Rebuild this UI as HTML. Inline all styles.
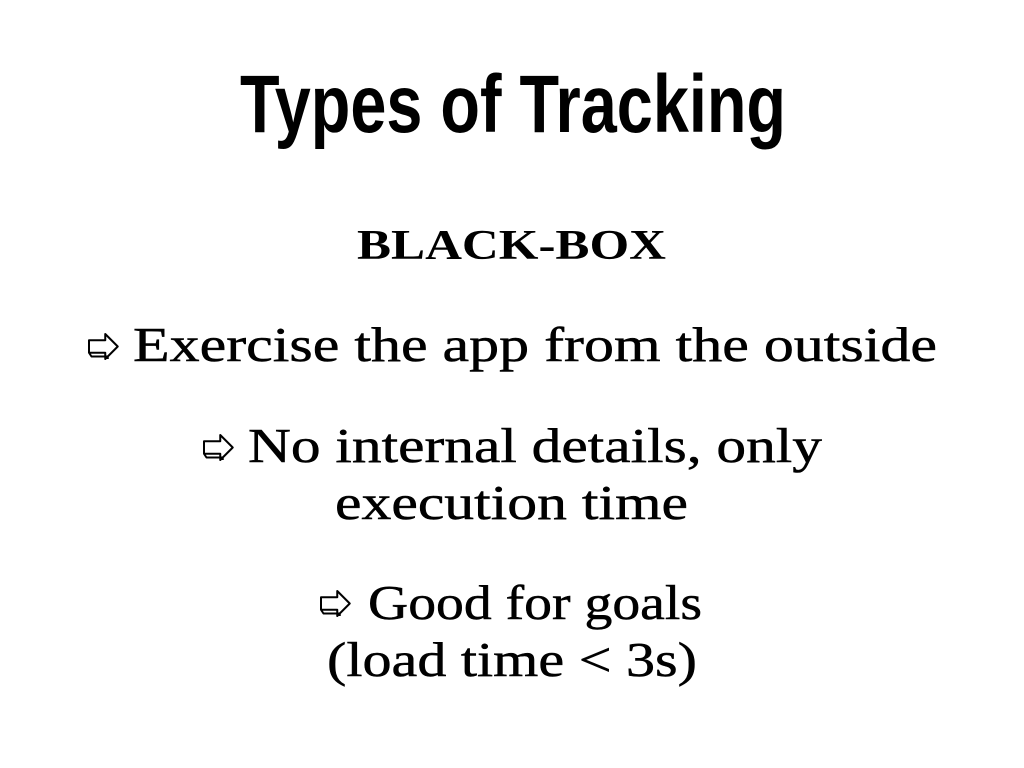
<!DOCTYPE html>
<html><head><meta charset="utf-8"><style>
html,body{margin:0;padding:0;background:#fff;width:1024px;height:768px;overflow:hidden}
</style></head><body>
<svg width="1024" height="768" viewBox="0 0 1024 768" xmlns="http://www.w3.org/2000/svg">
<rect width="1024" height="768" fill="#fff"/>
<text x="240" y="132" font-family="Liberation Sans Narrow, Liberation Sans, sans-serif" font-weight="bold" font-size="82" textLength="546" lengthAdjust="spacingAndGlyphs" fill="#000">Types of Tracking</text>
<text x="357" y="259" font-family="Liberation Serif, serif" font-weight="bold" font-size="42" textLength="309" lengthAdjust="spacingAndGlyphs" fill="#000">BLACK-BOX</text>
<g font-family="Liberation Serif, serif" font-size="49" fill="#000" stroke="#000" stroke-width="0.5">
<text x="133" y="361" textLength="804" lengthAdjust="spacingAndGlyphs">Exercise the app from the outside</text>
<text x="248" y="462" textLength="574" lengthAdjust="spacingAndGlyphs">No internal details, only</text>
<text x="335" y="519" textLength="353" lengthAdjust="spacingAndGlyphs">execution time</text>
<text x="368" y="619" textLength="334" lengthAdjust="spacingAndGlyphs">Good for goals</text>
<text x="327" y="676" textLength="370" lengthAdjust="spacingAndGlyphs">(load time &lt; 3s)</text>
</g>
<defs><path id="ar" d="M0 5 H13 V0 L23 10 L13 20 V15 H0 Z M0 15 L2 18 H15 V20" fill="none" stroke="#000" stroke-width="1.6" stroke-linejoin="round"/></defs>
<use href="#ar" transform="translate(89,334) scale(1.25)"/>
<use href="#ar" transform="translate(204,435) scale(1.25)"/>
<use href="#ar" transform="translate(321,591) scale(1.25)"/>
</svg>
</body></html>
